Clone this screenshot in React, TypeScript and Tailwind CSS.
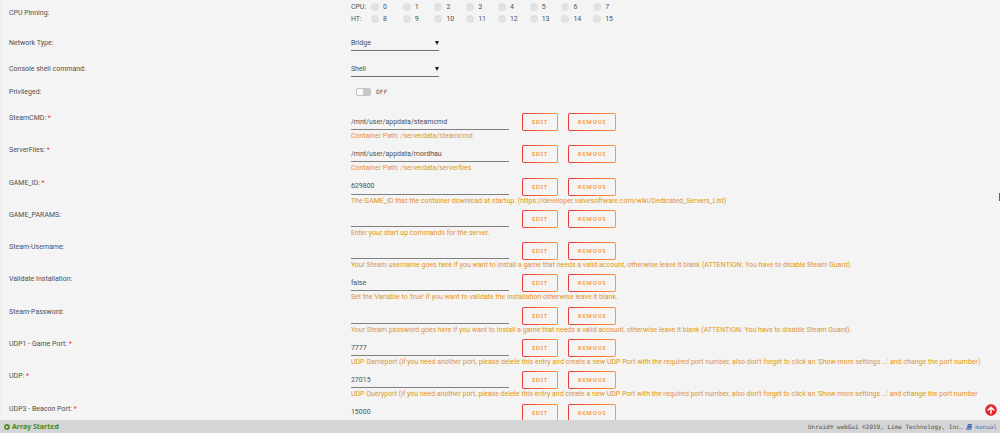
import { useId, type ReactNode } from "react";
import { FaArrowCircleUp, FaPlayCircle } from "react-icons/fa";

type Variable = {
  name: string;
  value: string;
  help?: string;
  required?: boolean;
};

const variables: Variable[] = [
  { name: "SteamCMD", value: "/mnt/user/appdata/steamcmd", help: "Container Path: /serverdata/steamcmd", required: true },
  { name: "ServerFiles", value: "/mnt/user/appdata/mordhau", help: "Container Path: /serverdata/serverfiles", required: true },
  {
    name: "GAME_ID",
    value: "629800",
    help: "The GAME_ID that the container download at startup. (https://developer.valvesoftware.com/wiki/Dedicated_Servers_List)",
    required: true,
  },
  { name: "GAME_PARAMS", value: "", help: "Enter your start up commands for the server." },
  {
    name: "Steam-Username",
    value: "",
    help: "Your Steam username goes here if you want to install a game that needs a valid account, otherwise leave it blank (ATTENTION: You have to disable Steam Guard).",
  },
  {
    name: "Validate Installation",
    value: "false",
    help: "Set the Variable to 'true' if you want to validate the installation otherwise leave it blank.",
  },
  {
    name: "Steam-Password",
    value: "",
    help: "Your Steam password goes here if you want to install a game that needs a valid account, otherwise leave it blank (ATTENTION: You have to disable Steam Guard).",
  },
  {
    name: "UDP1 - Game Port",
    value: "7777",
    help: "UDP Gameport (if you need another port, please delete this entry and create a new UDP Port with the required port number, also don't forget to click an 'Show more settings ...' and change the port number)",
    required: true,
  },
  {
    name: "UDP",
    value: "27015",
    help: "UDP Queryport (if you need another port, please delete this entry and create a new UDP Port with the required port number, also don't forget to click an 'Show more settings ...' and change the port number",
    required: true,
  },
  { name: "UDP3 - Beacon Port", value: "15000", required: true },
];

const rowGrid = "grid grid-cols-[34.5%_1fr]";

function CoreRow({ title, first }: { title: string; first: number }) {
  return (
    <div className="flex h-3 items-center">
      <span className="w-5">{title}</span>
      <div className="grid w-[254px] grid-cols-8">
        {Array.from({ length: 8 }, (_, i) => (
          <label key={i} className="flex items-center gap-1">
            <input type="checkbox" className="size-2 appearance-none rounded-full bg-[#e1e1e1] checked:bg-[#ff8c2f]" />
            {first + i}
          </label>
        ))}
      </div>
    </div>
  );
}

function SelectRow({ label, options }: { label: string; options: string[] }) {
  const id = useId();
  return (
    <div className={`${rowGrid} h-[26px] items-center`}>
      <label htmlFor={id}>{label}</label>
      <div className="relative w-[88px]">
        <select id={id} className="block h-4 w-full appearance-none border-b border-[#707070] bg-transparent pt-px pr-3 outline-none">
          {options.map((o) => (
            <option key={o}>{o}</option>
          ))}
        </select>
        <svg viewBox="0 0 4 4" className="pointer-events-none absolute top-1.5 right-0 size-1 fill-[#1c1b1b]">
          <path d="M0 0H4L2 4Z" />
        </svg>
      </div>
    </div>
  );
}

function OutlineButton({ children }: { children: ReactNode }) {
  return (
    <button
      type="button"
      className="flex h-[18px] items-center rounded-[2px] border border-transparent px-[9px] font-['Noto_Sans',sans-serif] text-[6px] font-bold tracking-widest text-[#ffa05a] uppercase [background:linear-gradient(#f4f4f4,#f4f4f4)_padding-box,linear-gradient(90deg,#e63a3a,#ff9640)_border-box]"
    >
      {children}
    </button>
  );
}

function VariableRow({ name, value, help, required }: Variable) {
  const id = useId();
  return (
    <div className={`${rowGrid} pt-[3px]`}>
      <label htmlFor={id} className="leading-[10px]">
        {name}:{required && <span className="text-[#ff3030]"> *</span>}
      </label>
      <div className="min-w-0">
        <div className="flex items-start">
          <input
            id={id}
            type="text"
            defaultValue={value}
            className="mr-[13px] h-[17px] w-[158px] border-b border-[#808080] bg-transparent pt-px outline-none"
          />
          <div className="flex gap-2.5">
            <OutlineButton>Edit</OutlineButton>
            <OutlineButton>Remove</OutlineButton>
          </div>
        </div>
        {help && <p className="leading-[10px] whitespace-nowrap text-[#e39420]">{help}</p>}
      </div>
    </div>
  );
}

export default function App() {
  return (
    <div className="relative flex h-screen min-h-[400px] flex-col overflow-hidden border-l-2 border-[#f1f1f1] bg-[#f4f4f4] font-[Roboto,'Noto_Sans',sans-serif] text-[7px] leading-3 text-[#505050]">
      <form className="flex flex-1 flex-col pl-[7px]">
        <div className={`${rowGrid} h-[30px] items-center pb-1`}>
          <span>CPU Pinning:</span>
          <div>
            <CoreRow title="CPU:" first={0} />
            <CoreRow title="HT:" first={8} />
          </div>
        </div>
        <SelectRow label="Network Type:" options={["Bridge", "Host", "None"]} />
        <SelectRow label="Console shell command:" options={["Shell", "Bash"]} />
        <div className={`${rowGrid} mb-2 h-5 items-center`}>
          <label htmlFor="privileged">Privileged:</label>
          <div className="flex items-center gap-[5px] pl-[5px]">
            <input
              id="privileged"
              type="checkbox"
              className="h-2 w-[15px] appearance-none rounded-[2px] border border-[#c4c4c4] bg-[linear-gradient(to_right,#fcfcfc_45%,#c8c8c8_45%)]"
            />
            <span className="font-['DejaVu_Sans_Mono',monospace] text-[6px] tracking-wider">OFF</span>
          </div>
        </div>
        <div className="grid flex-1 auto-rows-fr">
          {variables.map((v) => (
            <VariableRow key={v.name} {...v} />
          ))}
        </div>
      </form>

      <div className="absolute top-[193px] right-0 h-2 w-px bg-[#606060]" />

      <a href="#top" aria-label="Back to top" className="fixed right-[3px] bottom-[17px] rounded-full bg-white text-[#e22828]">
        <FaArrowCircleUp className="size-3" />
      </a>

      <footer className="fixed inset-x-0 bottom-0 flex h-[13px] items-center justify-between bg-[#d4d5d6] pr-[3px] pl-1">
        <span className="flex items-center gap-0.5 pt-px font-['Noto_Sans',sans-serif] font-bold text-[#4f8a10]">
          <FaPlayCircle className="size-1.5" />
          Array Started
        </span>
        <span className="flex items-center gap-[3px] font-['DejaVu_Sans_Mono',monospace] text-[6px]">
          Unraid® webGui ©2019, Lime Technology, Inc.
          <a href="#manual" className="flex items-center gap-[3px] text-[#486dba]">
            <svg viewBox="0 0 12 12" className="size-1.5">
              <path d="M4 0H12L9.5 9H1.5Z" fill="currentColor" />
              <path d="M1.5 8C0 11.2 1 11.2 2 11.2H9.5L12 3" fill="none" stroke="currentColor" strokeWidth="1.6" />
              <path d="M5.2 2.8H9.4" stroke="#d4d5d6" strokeWidth="0.8" />
            </svg>
            manual
          </a>
        </span>
      </footer>
    </div>
  );
}
